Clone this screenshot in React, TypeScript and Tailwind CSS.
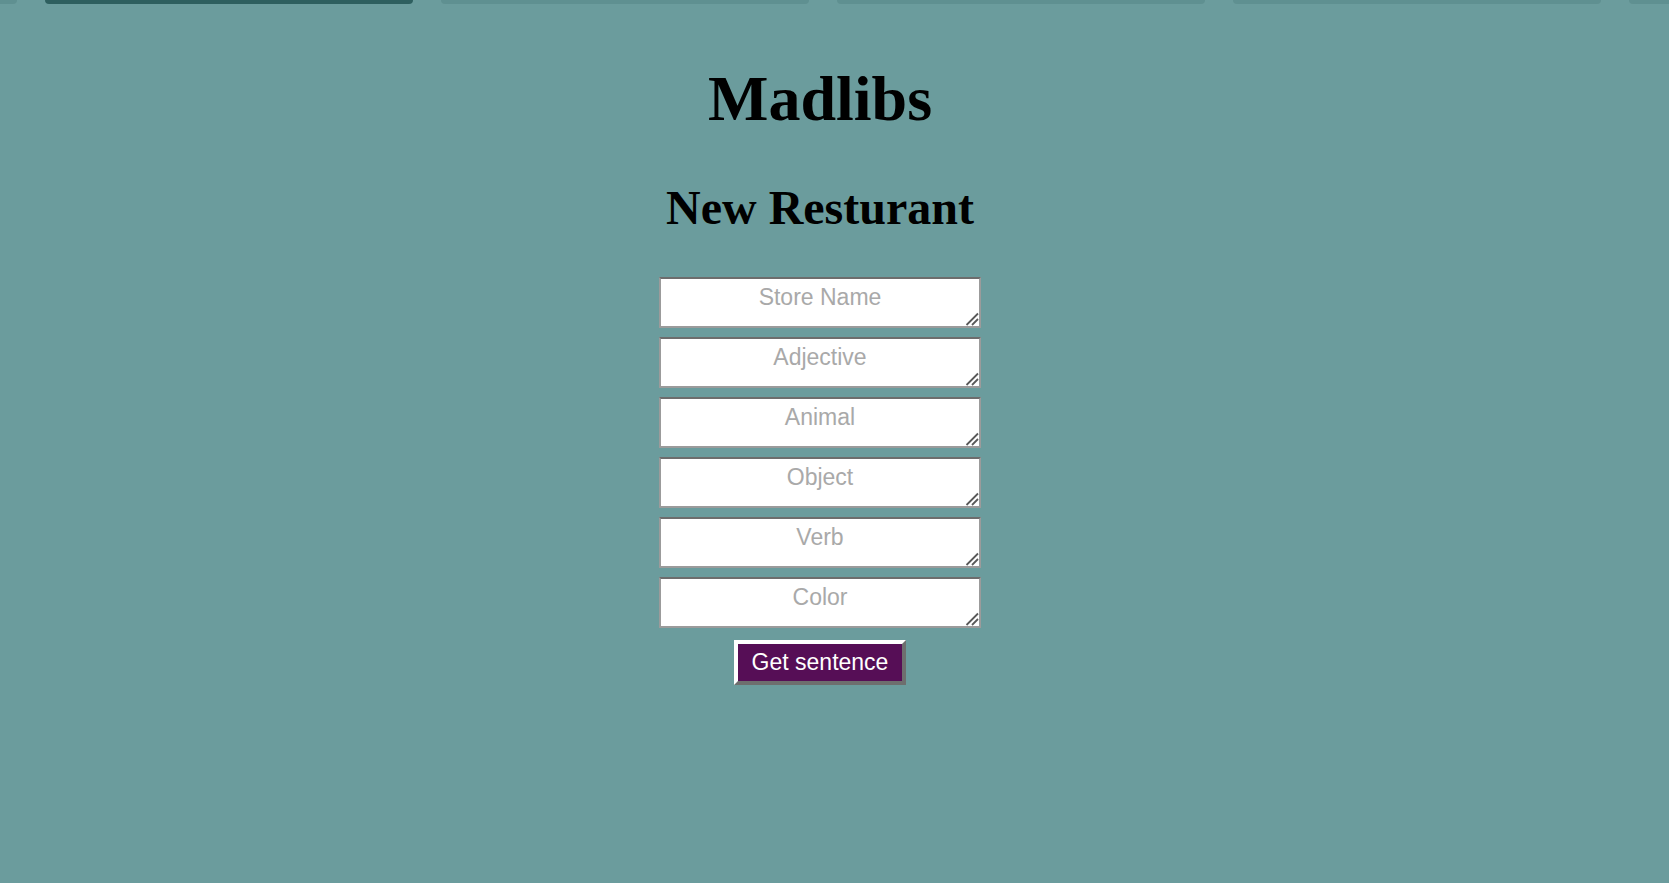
import React from "react";

const fields = ["Store Name", "Adjective", "Animal", "Object", "Verb", "Color"];
const tabs = [0, 1, 2, 3, 4, 5];

function Grip() {
  return (
    <svg
      className="pointer-events-none absolute right-[2px] bottom-[2px]"
      width="14"
      height="14"
      viewBox="0 0 14 14"
    >
      <line x1="1.5" y1="13" x2="13" y2="1.5" stroke="#595959" strokeWidth="1.8" />
      <line x1="7" y1="13" x2="13" y2="7" stroke="#595959" strokeWidth="1.8" />
    </svg>
  );
}

export default function App() {
  return (
    <div className="min-h-screen w-full overflow-hidden bg-[#6b9c9d]">
      <div className="flex h-[4px] gap-[28px] overflow-visible">
        {tabs.map((i) => (
          <div
            key={i}
            className={
              i === 1
                ? "ml-0 h-[4px] w-[368px] shrink-0 rounded-b-[8px] bg-[#2e5f5f]"
                : i === 0
                ? "ml-[-351px] h-[4px] w-[368px] shrink-0 rounded-b-[8px] bg-[#5f9091]"
                : "h-[4px] w-[368px] shrink-0 rounded-b-[8px] bg-[#5f9091]"
            }
          />
        ))}
      </div>
      <div className="flex w-[1640px] flex-col items-center">
        <h1 className="mt-[58px] font-['Liberation_Serif',serif] text-[64px] font-bold leading-[74px] text-black">
          Madlibs
        </h1>
        <h2 className="mt-[44px] font-['Liberation_Serif',serif] text-[48px] font-bold leading-[56px] text-black">
          New Resturant
        </h2>
        <div className="mt-[41px] flex flex-col items-center gap-[9px]">
          {fields.map((f) => (
            <div key={f} className="relative h-[51px] w-[322px]">
              <textarea
                placeholder={f}
                className="block h-[51px] w-[322px] resize-none border-2 border-t-[#6d6d6d] border-l-[#9b9b9b] border-r-[#9b9b9b] border-b-[#9b9b9b] bg-white px-[4px] pt-[5px] text-center font-['Liberation_Sans',Arial,sans-serif] text-[23px] leading-[26px] text-black outline-none placeholder:text-[#a9a9a9]"
              />
              <Grip />
            </div>
          ))}
        </div>
        <button className="mt-[12px] flex h-[45px] w-[172px] items-center justify-center border-4 border-t-white border-l-white border-r-[#6e6e6e] border-b-[#6e6e6e] bg-[#560e56] font-['Liberation_Sans',Arial,sans-serif] text-[23px] leading-none text-white">
          Get sentence
        </button>
      </div>
    </div>
  );
}
